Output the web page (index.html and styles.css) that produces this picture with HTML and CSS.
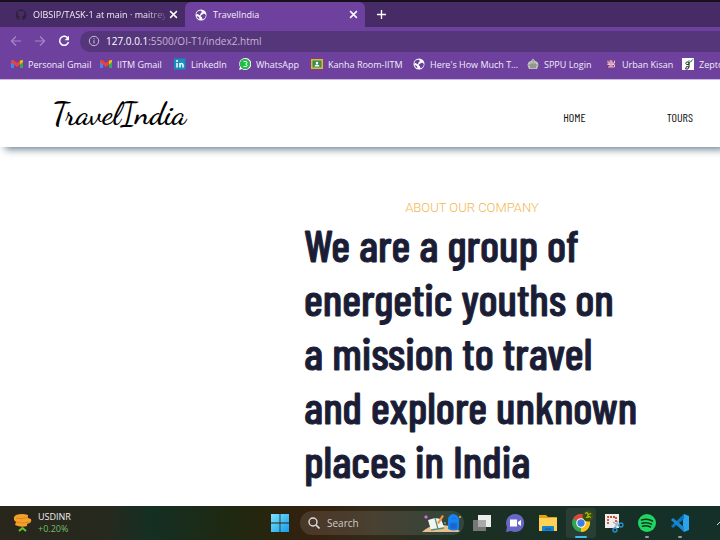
FILE: index.html
```html
<!DOCTYPE html>
<html lang="en">
<head>
<meta charset="utf-8">
<title>TravelIndia</title>
<link rel="stylesheet" href="styles.css">
</head>
<body>
<svg class="defs" aria-hidden="true">
  <symbol id="globe" viewBox="0 0 24 24"><circle cx="12" cy="12" r="11" fill="#fff"/><path d="M5 5l6-2 3 3-3 3-1 4-5-3-3 1zM13 12l5-3 4 3-2 6-5 3-1-4-3-3zM3 14l5 2 1 5-4-3z" fill="#67419a"/></symbol>
  <symbol id="gmail" viewBox="0 0 24 18"><path d="M0 3v14h6V8z" fill="#4285f4"/><path d="M24 3v14h-6V8z" fill="#34a853"/><path d="M18 2l6-1v4l-6 5z" fill="#fbbc04"/><path d="M0 5V2Q3-1 6 2l6 5 6-5v8l-6 5-6-5z" fill="#ea4335"/></symbol>
  <symbol id="close" viewBox="0 0 8 8"><path d="M1 1l6 6M7 1L1 7" stroke="#fff" stroke-width="1.3"/></symbol>
</svg>
<div class="window">
  <header class="browser">
    <div class="tabs">
      <div class="tab">
        <svg class="fav" viewBox="0 0 24 24"><path fill="#2a2338" d="M12 1a11 11 0 0 0-4 21c1 0 1-1 1-3-3 1-4-1-5-3 2 0 2 2 5 1l1-2c-4-1-5-3-5-6l1-3V3l4 1h4l4-1v3l1 3c0 4-2 5-5 6 1 1 1 3 1 6 0 1 0 1 1 1A11 11 0 0 0 12 1z"/></svg>
        <span class="title fade">OIBSIP/TASK-1 at main · maitreye</span>
        <button class="x" aria-label="Close tab"><svg viewBox="0 0 8 8"><use href="#close"/></svg></button>
      </div>
      <div class="tab active">
        <svg class="fav" viewBox="0 0 24 24"><use href="#globe"/></svg>
        <span class="title">TravelIndia</span>
        <button class="x" aria-label="Close tab"><svg viewBox="0 0 8 8"><use href="#close"/></svg></button>
      </div>
      <button class="plus" aria-label="New tab"><svg viewBox="0 0 10 10"><path d="M5 0v10M0 5h10" stroke="#fff" stroke-width="1.5"/></svg></button>
    </div>
    <div class="toolbar">
      <button aria-label="Back"><svg viewBox="0 0 12 12"><path d="M11 6H1.500M6 1.500L1.500 6 6 10.500" fill="none" stroke="#a587c8" stroke-width="1.200"/></svg></button>
      <button aria-label="Forward"><svg viewBox="0 0 12 12"><path d="M1 6h9.500M6 1.500L10.500 6 6 10.500" fill="none" stroke="#a587c8" stroke-width="1.200"/></svg></button>
      <button aria-label="Reload"><svg viewBox="0 0 12 12"><path d="M10 3.500A4.500 4.500 0 1 0 10.500 7" fill="none" stroke="#fff" stroke-width="1.500"/><path d="M11 .8v4.400H6.600z" fill="#fff"/></svg></button>
      <div class="address">
        <svg viewBox="0 0 12 12"><circle cx="6" cy="6" r="4.700" fill="none" stroke="#c9bbd8"/><path d="M6 5.300v3.200M6 3.200v1.100" stroke="#c9bbd8" stroke-width="1.100"/></svg>
        <span><b>127.0.0.1</b>:5500/OI-T1/index2.html</span>
      </div>
    </div>
    <nav class="bookmarks" aria-label="Bookmarks">
      <a href="#"><svg viewBox="0 0 24 24"><use href="#gmail" y="3" width="24" height="18"/></svg>Personal Gmail</a>
      <a href="#"><svg viewBox="0 0 24 24"><use href="#gmail" y="3" width="24" height="18"/></svg>IITM Gmail</a>
      <a href="#"><svg viewBox="0 0 24 24"><path d="M0 1h23v22H0z" fill="#1192bd"/><path d="M6 10v9M12 19v-9M12 19v-4q0-4 3-4t3 4v4" fill="none" stroke="#fff" stroke-width="3"/><circle cx="6" cy="6" r="2" fill="#fff"/></svg>LinkedIn</a>
      <a href="#"><svg viewBox="0 0 24 24"><path d="M12 0a12 12 0 1 1-6 22l-6 2 2-6A12 12 0 0 1 12 0z" fill="#fff"/><circle cx="12" cy="12" r="10.500" fill="#20bd46"/><path d="M9 7h5q2 0 2 2.500T13 12q3 0 3 2.500T14 17H9" fill="none" stroke="#fff" stroke-width="2"/></svg>WhatsApp</a>
      <a href="#"><svg viewBox="0 0 24 24"><path d="M0 2h24v20H0z" fill="#f0b51e"/><path d="M3 5h18v14H3z" fill="#2d9257"/><circle cx="12" cy="10" r="2.500" fill="#fff"/><path d="M7 17q0-4 5-4t5 4z" fill="#fff"/></svg>Kanha Room-IITM</a>
      <a href="#"><svg viewBox="0 0 24 24"><use href="#globe"/></svg>Here's How Much T...</a>
      <a href="#"><svg viewBox="0 0 24 24"><path d="M1 14Q2 7 8 6l4-5 4 5q6 1 7 8l-3 8H4z" fill="#c9ccc4"/><path d="M2 14h20M8 9v12M16 9v12M12 3v18M5 18h14" stroke="#5d655c" stroke-width="1.200"/></svg>SPPU Login</a>
      <a href="#"><svg viewBox="0 0 24 24"><path d="M4 4h16v16H4z" fill="#843069"/><path d="M6 5v5h4V5M14 5v5h5V5M12 4v16M5 13h5v5H6M19 13h-5v5h5v-4M5 12h14" fill="none" stroke="#efd3e5" stroke-width="1.800"/></svg>Urban Kisan</a>
      <a href="#"><svg viewBox="0 0 24 24"><path d="M0 0h24v24H0z" fill="#fff"/><path d="M14 8H9q-3 3 0 5h5V8v9l-2 5H7l2-5 6 1" fill="none" stroke="#333" stroke-width="2"/><path d="M13 5l4 2 6-5M16 8l4-2" stroke="#35a160" stroke-width="2" fill="none"/></svg>Zepto</a>
    </nav>
  </header>

  <main class="page">
    <div class="site-head">
      <a class="logo" href="#">TravelIndia</a>
      <nav class="menu"><a href="#">HOME</a><a href="#">TOURS</a></nav>
    </div>
    <section class="about">
      <p>ABOUT OUR COMPANY</p>
      <h1>We are a group of<br>energetic youths on<br>a mission to travel<br>and explore unknown<br>places in India</h1>
    </section>
  </main>

  <footer class="taskbar">
    <div class="widget">
      <svg viewBox="0 0 20 20"><path d="M3 2q6-2 12 0v3l3 1q1 2-1 4l-3 1v2Q8 15 2 12l1-3-2-2V4z" fill="#f6a02c"/><path d="M3 5q6 2 12-1M3 9q7 2 14 0" stroke="#dc8420" fill="none"/><path d="M6 18l3.500-3 3.500 3" fill="none" stroke="#62c82b" stroke-width="2"/></svg>
      <div><span>USDINR</span><span class="up">+0.20%</span></div>
    </div>
    <div class="center">
      <button class="start" aria-label="Start"><svg viewBox="0 0 18 18"><defs><linearGradient id="w" x2="1" y2="1"><stop stop-color="#7ce4ff"/><stop offset="1" stop-color="#149de9"/></linearGradient></defs><path d="M0 0h8.600v8.600H0zM9.400 0H18v8.600H9.400zM0 9.400h8.600V18H0zM9.400 9.400H18V18H9.400z" fill="url(#w)"/></svg></button>
      <label class="search">
        <svg class="lens" viewBox="0 0 12 12"><circle cx="5" cy="5" r="4" fill="none" stroke="#ddd" stroke-width="1.400"/><path d="M8 8l3.500 3.500" stroke="#ddd" stroke-width="1.600"/></svg>
        <input type="text" placeholder="Search" aria-label="Search">
        <svg class="art" viewBox="0 0 40 20"><path d="M0 19q8-8 20-7 10 0 18 6l-2 1z" fill="#e7c08d"/><path d="M6 7l7-2 6 1 3 8-7 2-6 1z" fill="#f2f5f3"/><path d="M13 5l3 11M9 17l13-2" stroke="#5a907a" stroke-width="1.300"/><path d="M15 10l5-8 2 1-5 8z" fill="#ef963c"/><path d="M26 16V7q0-5 5-6 6 1 6 6v9q-5 3-11 0z" fill="#1685f3"/><path d="M28 10h7v6h-7zM29 6q3-2 5 0" fill="#1767cf" stroke="#1c74dd"/><path d="M2 4l2-2 2 2-2 2z" fill="#d96ae6"/><circle cx="38" cy="4" r="1" fill="#f4b72c"/><circle cx="23" cy="10" r="1" fill="#2cbcb1"/></svg>
      </label>
      <button aria-label="Task view"><svg viewBox="0 0 20 20"><path d="M6 2h13v12H6z" fill="#ececec"/><path d="M1 7h13v11H1z" fill="#777"/><path d="M6 7h8v7H6z" fill="#aaa"/></svg></button>
      <button aria-label="Chat"><svg viewBox="0 0 20 20"><path d="M10 1a9 9 0 1 1-4 17l-5 1 1-5A9 9 0 0 1 10 1z" fill="#6967c5"/><path d="M5 6.500h7v7H5zM13 9l3-2v6l-3-2z" fill="#fff"/></svg></button>
      <button aria-label="Files"><svg viewBox="0 0 20 20"><path d="M1 2h7l2 2h9v5H1z" fill="#e2a013"/><path d="M1 5h18v13H1z" fill="#ffd157"/><path d="M4 18v-4q0-1 1-1h10q1 0 1 1v4z" fill="#1683d2"/><path d="M7 16h6" stroke="#0b5599"/></svg></button>
      <button class="current" aria-label="Chrome"><svg viewBox="0 0 20 20"><circle cx="10" cy="10" r="9" fill="#2fa552"/><path d="M10 10L2.200 5.500A9 9 0 0 1 17.800 5.500z" fill="#e64335"/><path d="M10 10L17.800 5.500A9 9 0 0 1 10 19z" fill="#fbc116"/><circle cx="10" cy="10" r="4.800" fill="#fff"/><circle cx="10" cy="10" r="3.700" fill="#3b7de2"/></svg><svg class="avatar" viewBox="0 0 12 12"><circle cx="6" cy="6" r="5.500" fill="#39510c"/><path d="M3 3.500l2-1 1 2 3-1M4 7.500l3-1 2 1M6 5v3" stroke="#b3b820" stroke-width="1.200" fill="none"/></svg></button>
      <button aria-label="Snipping Tool"><svg viewBox="0 0 20 20"><path d="M1 1h14v14H1z" fill="#eee"/><path d="M4 11V4h8v5" fill="none" stroke="#cf4b36" stroke-width="1.800" stroke-dasharray="2 1"/><path d="M9 9l6 4M14 8l-3 7" stroke="#aab" stroke-width="1.500"/><circle cx="17" cy="12" r="2" fill="none" stroke="#2a91ce" stroke-width="1.300"/><circle cx="11" cy="17" r="2" fill="none" stroke="#2a91ce" stroke-width="1.300"/></svg></button>
      <button class="running" aria-label="Spotify"><svg viewBox="0 0 20 20"><circle cx="10" cy="10" r="9" fill="#1ed760"/><path d="M4.500 7q6-2 11 1M5 10.200q5-1.500 9.500 1M5.500 13.200q4-1 8 .8" fill="none" stroke="#12321f" stroke-width="1.500" stroke-linecap="round"/></svg></button>
      <button class="running" aria-label="VS Code"><svg viewBox="0 0 20 20"><path d="M14 1l5 2v14l-5 2-1-2V3z" fill="#2ba4ee"/><path d="M14 1L1 13l2 2L14 6z" fill="#0b76bd"/><path d="M14 19L1 7l2-2 11 9z" fill="#1689d2"/></svg></button>
    </div>
    <button class="tray" aria-label="Hidden icons"><svg viewBox="0 0 8 8"><path d="M1 6l3-3 3 3" fill="none" stroke="#ddd"/></svg></button>
  </footer>
</div>
</body>
</html>
```
FILE: styles.css
```css
* { box-sizing: border-box; }
body { margin: 0; background: #fff; font-family: "Segoe UI", "Open Sans", "Noto Sans", sans-serif; font-size: 9px; }
.defs { position: absolute; width: 0; height: 0; }
button { padding: 0; border: 0; background: none; display: flex; align-items: center; justify-content: center; }
a { color: inherit; text-decoration: none; }
svg { display: block; flex: none; }
.window { display: flex; flex-direction: column; min-height: 100vh; overflow: hidden; }

.browser { background: #6e419f; color: #f3edf9; border-top: 2px solid #15101c; border-bottom: 1px solid #cdbbe0; }
.tabs { display: flex; height: 25px; background: #472b66; }
.tab { display: flex; align-items: center; flex: 0 0 180px; min-width: 0; gap: 6px; padding: 0 7px 0 10px; }
.tab:first-child { flex-basis: 185px; padding-left: 15px; border-bottom-right-radius: 6px; }
.tab.active { background: #6e419f; border-radius: 6px 6px 0 0; }
.fav { width: 12px; height: 12px; }
.title { flex: 1; min-width: 0; overflow: hidden; white-space: nowrap; }
.fade { margin-right: -2px; mask-image: linear-gradient(90deg, #000 85%, #0003); }
.x, .x svg { width: 9px; height: 9px; }
.plus { width: 32px; }
.plus svg { width: 9px; height: 9px; }
.toolbar { display: flex; align-items: center; gap: 12px; height: 28px; padding: 0 0 0 10px; }
.toolbar svg { width: 12px; height: 12px; }
.address { flex: 1; display: flex; align-items: center; gap: 6px; height: 21px; margin-left: -2px; padding-left: 8px; border-radius: 11px 0 0 11px; background: #56367a; color: #c4b5d5; font-size: 10px; }
.address b { font-weight: 400; color: #fff; }
.bookmarks { display: grid; grid-template-columns: 89px 74px 65px 72px 102px 114px 78px 77px 1fr; height: 24px; padding-left: 11px; overflow: hidden; }
.bookmarks a { display: flex; align-items: center; gap: 5px; white-space: nowrap; min-width: 0; height: 18px; }
.bookmarks svg { width: 12px; height: 12px; }

.page { flex: 1; overflow: hidden; }
.site-head { display: flex; align-items: center; justify-content: space-between; height: 67px; padding: 0 27px 0 52px; box-shadow: 5px 2px 8px #60788c; }
.logo { font-family: "Satisfy", "Dancing Script", "Kaushan Script", cursive; font-weight: 600; font-size: 31px; color: #000; }
.menu { display: flex; gap: 81px; padding-top: 6px; font-family: "Barlow Condensed", "Liberation Sans Narrow", sans-serif; font-size: 12px; color: #111; }
.about { width: 360px; margin: 52px 0 0 304px; color: #1a1d35; }
.about p { width: 336px; margin: 0; text-align: center; font: 300 13px/18px Roboto, sans-serif; color: #f0b850; }
.about h1 { margin: 0; font: 500 45px/54px "Barlow Condensed", "Liberation Sans Narrow", sans-serif; -webkit-text-stroke: 1px #1a1d35; white-space: nowrap; }

.taskbar { display: flex; align-items: center; height: 34px; background: linear-gradient(90deg, #29261c 0, #26291e 15%, #142f23 21%, #20280f 33%, #35200f 44%, #332a18 52%, #1d2f23 62%, #143028 100%); color: #eee; }
.widget { display: flex; align-items: center; gap: 5px; flex: 0 0 270px; padding-left: 13px; }
.widget svg { width: 20px; height: 20px; }
.widget span { display: block; line-height: 12px; }
.widget .up { color: #72bd68; }
.center { display: flex; align-items: center; flex: 1; height: 100%; gap: 3px; }
.center button { position: relative; width: 30px; height: 30px; border-radius: 3px; }
.center button svg { width: 20px; height: 20px; }
.center .start { width: 20px; margin-right: 7px; }
.center .start svg { width: 18px; height: 18px; }
.search { display: flex; align-items: center; width: 164px; height: 24px; padding: 0 2px 0 8px; border-radius: 12px; background: #ffffff1c; }
.search input { flex: 1; min-width: 0; border: 0; padding: 0 7px; background: none; color: #eee; font: 10px "Open Sans", sans-serif; outline: 0; }
.search input::placeholder { color: #d0ccc7; opacity: 1; }
.lens { width: 12px; height: 12px; }
.art { width: 40px; height: 20px; }
.center .current { background: #ffffff12; }
.center .current .avatar { position: absolute; top: 2px; right: 2px; width: 12px; height: 12px; }
.current::after, .running::after { content: ""; position: absolute; bottom: 0; width: 4px; height: 2px; border-radius: 1px; background: #999; }
.current::after { width: 12px; background: #45b9f0; }
.tray { width: 4px; justify-content: flex-start; overflow: hidden; }
.tray svg { width: 8px; height: 8px; }
```
